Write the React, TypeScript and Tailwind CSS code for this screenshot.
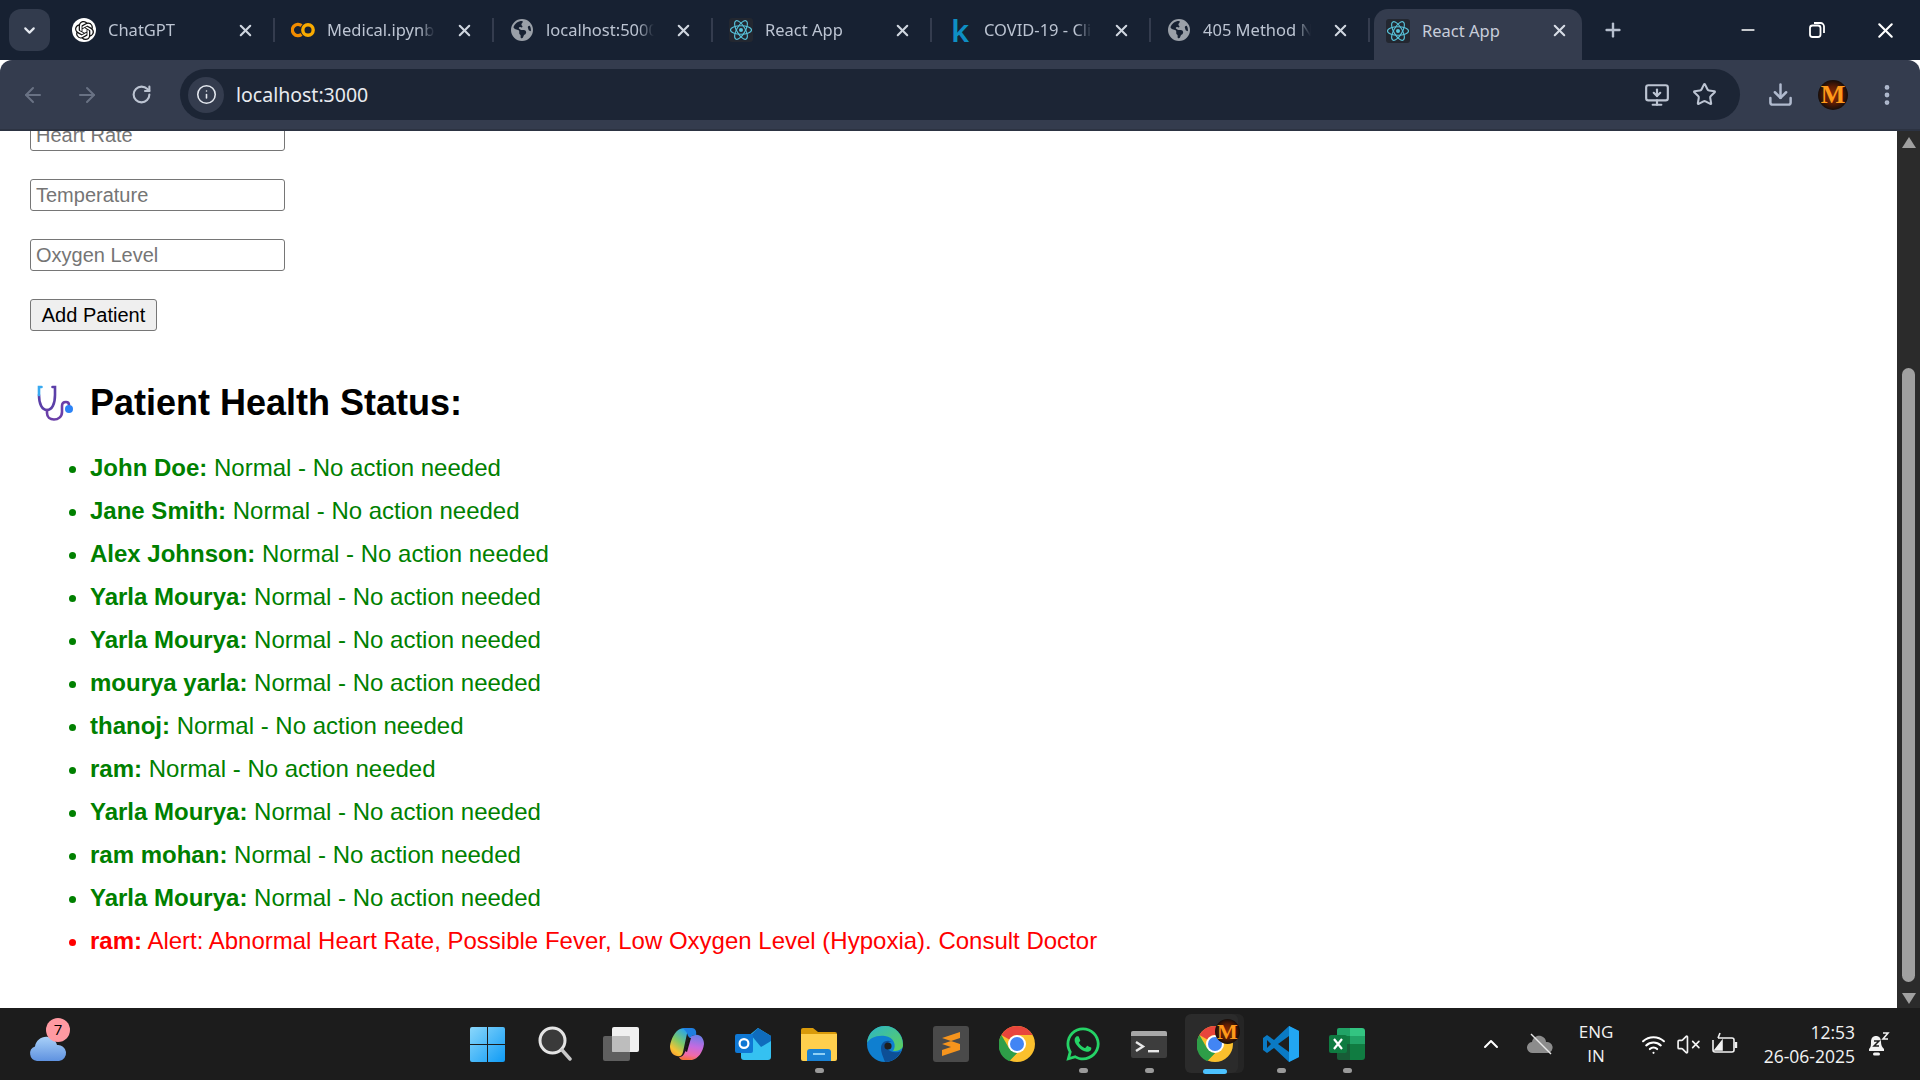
import type { ReactNode } from 'react';
import { ArrowLeft, ArrowRight, ChevronDown, ChevronUp, Download, EllipsisVertical, Info, Minus, MonitorDown, Plus, RotateCw, Star, VolumeX, Wifi, X } from 'lucide-react';
import { FaEarthAmericas } from 'react-icons/fa6';
import { FaWhatsapp } from 'react-icons/fa';
import { SiOpenai } from 'react-icons/si';

const patients = [
  { name: 'John Doe', status: 'Normal - No action needed' },
  { name: 'Jane Smith', status: 'Normal - No action needed' },
  { name: 'Alex Johnson', status: 'Normal - No action needed' },
  { name: 'Yarla Mourya', status: 'Normal - No action needed' },
  { name: 'Yarla Mourya', status: 'Normal - No action needed' },
  { name: 'mourya yarla', status: 'Normal - No action needed' },
  { name: 'thanoj', status: 'Normal - No action needed' },
  { name: 'ram', status: 'Normal - No action needed' },
  { name: 'Yarla Mourya', status: 'Normal - No action needed' },
  { name: 'ram mohan', status: 'Normal - No action needed' },
  { name: 'Yarla Mourya', status: 'Normal - No action needed' },
  { name: 'ram', status: 'Alert: Abnormal Heart Rate, Possible Fever, Low Oxygen Level (Hypoxia). Consult Doctor', alert: true }
];

function ReactLogo({ size = 24 }: { size?: number }) {
  return (
    <span className="flex h-[24px] w-[24px] items-center justify-center rounded-[3px] bg-[#232730]">
      <svg width={size} height={size} viewBox="0 0 24 24" fill="none" stroke="#58c4dc" strokeWidth="1.1">
        <ellipse cx="12" cy="12" rx="10.5" ry="4.2" />
        <ellipse cx="12" cy="12" rx="10.5" ry="4.2" transform="rotate(60 12 12)" />
        <ellipse cx="12" cy="12" rx="10.5" ry="4.2" transform="rotate(120 12 12)" />
        <circle cx="12" cy="12" r="2" fill="#58c4dc" stroke="none" />
      </svg>
    </span>
  );
}

function ColabLogo() {
  return (
    <svg width="24" height="16" viewBox="0 0 24 16" fill="none" strokeWidth="3.4">
      <path d="M10.5 3.6a5.6 5.6 0 1 0 0 8.8" stroke="#f28c00" />
      <circle cx="17" cy="8" r="5.2" stroke="#f9ab00" />
    </svg>
  );
}

function MAvatar({ className }: { className: string }) {
  return (
    <span className={`flex items-center justify-center rounded-full bg-[radial-gradient(circle,#8a2c06_0%,#5a1c04_40%,#0b0b0b_75%)] font-bold leading-none text-[#ff9a1a] [font-family:'Liberation_Serif',serif] ${className}`}>
      M
    </span>
  );
}

const browserTabs: { title: string; icon: ReactNode }[] = [
  {
    title: 'ChatGPT',
    icon: (
      <span className="flex h-[24px] w-[24px] items-center justify-center rounded-full bg-white">
        <SiOpenai size={19} color="#111" />
      </span>
    )
  },
  { title: 'Medical.ipynb', icon: <ColabLogo /> },
  { title: 'localhost:5000', icon: <FaEarthAmericas size={22} color="#9aa0a8" /> },
  { title: 'React App', icon: <ReactLogo /> },
  { title: 'COVID-19 - Clinical', icon: <span className="text-[31px] font-semibold leading-none text-[#0e8fc4]">k</span> },
  { title: '405 Method Not', icon: <FaEarthAmericas size={22} color="#9aa0a8" /> }
];

function TabStrip() {
  return (
    <div className="flex h-[60px] items-stretch bg-[#172132] pl-[9px] font-['Noto_Sans',sans-serif]">
      <div className="mt-[9px] flex h-[42px] w-[41px] items-center justify-center rounded-[12px] bg-[#323b4d]">
        <ChevronDown size={17} color="#e5e9f0" strokeWidth={3} />
      </div>
      <div className="ml-[6px] flex">
        {browserTabs.map((tab) => (
          <div key={tab.title} className="flex h-[60px] w-[219px] items-center pl-[16px]">
            <span className="flex w-[24px] shrink-0 items-center justify-center">{tab.icon}</span>
            <span className="ml-[12px] w-[113px] overflow-hidden whitespace-nowrap pt-[1px] text-[16.5px] text-[#bcc4d2] [mask-image:linear-gradient(to_right,black_85%,transparent)]">
              {tab.title}
            </span>
            <X size={19} color="#d0d6e0" strokeWidth={2.6} className="ml-[20px] shrink-0" />
            <span className="ml-[18px] h-[24px] w-[2px] shrink-0 bg-[#343c4e]" />
          </div>
        ))}
      </div>
      <div className="relative ml-[4px] mt-[9px] flex h-[51px] w-[208px] items-center rounded-t-[14px] bg-[#343c4e] pb-[8px] pl-[12px]">
        <ReactLogo />
        <span className="ml-[12px] w-[128px] pt-[1px] text-[16.5px] text-[#c8cedb]">React App</span>
        <X size={19} color="#d8dde6" strokeWidth={2.6} />
      </div>
      <Plus size={22} color="#b6bfce" strokeWidth={2.6} className="ml-[20px] mt-[19px]" />
      <div className="ml-auto flex items-start pt-[9px]">
        <div className="flex h-[42px] w-[69px] items-center justify-center"><Minus size={20} color="#fff" strokeWidth={2} /></div>
        <div className="flex h-[42px] w-[69px] items-center justify-center">
          <svg width="18" height="18" viewBox="0 0 18 18" fill="none" stroke="#fff" strokeWidth="1.8">
            <rect x="2" y="4.5" width="10.5" height="11.5" rx="2.5" />
            <path d="M6 2h6.5A3.5 3.5 0 0 1 16 5.5V12" />
          </svg>
        </div>
        <div className="flex h-[42px] w-[69px] items-center justify-center"><X size={25} color="#fff" strokeWidth={2} /></div>
      </div>
    </div>
  );
}

function ToolBar() {
  return (
    <div className="flex h-[71px] items-start rounded-t-[12px] border-b-2 border-[#2c3342] bg-[#343c4e] pl-[6px] pt-[9px] font-['Noto_Sans',sans-serif]">
      <div className="flex h-[51px] w-[54px] items-center justify-center"><ArrowLeft size={24} color="#697284" strokeWidth={2} /></div>
      <div className="flex h-[51px] w-[54px] items-center justify-center"><ArrowRight size={24} color="#697284" strokeWidth={2} /></div>
      <div className="flex h-[51px] w-[54px] items-center justify-center"><RotateCw size={21} color="#bcc4d2" strokeWidth={2.4} /></div>
      <div className="ml-[12px] flex h-[51px] w-[1560px] items-center rounded-full bg-[#1c2535] pl-[8px]">
        <span className="flex h-[36px] w-[36px] items-center justify-center rounded-full bg-[#343c4e]">
          <Info size={21} color="#e3e7ee" strokeWidth={1.8} />
        </span>
        <span className="ml-[12px] text-[19.5px] text-[#e8ebf0]">localhost:3000</span>
        <MonitorDown size={26} color="#bcc4d2" strokeWidth={2} className="ml-auto" />
        <Star size={25} color="#bcc4d2" strokeWidth={2} className="ml-[22px] mr-[23px]" />
      </div>
      <div className="flex h-[51px] items-center">
        <Download size={27} color="#b0bace" strokeWidth={2.2} className="ml-[27px]" />
        <MAvatar className="ml-[24px] h-[30px] w-[30px] text-[26px]" />
        <EllipsisVertical size={26} color="#b0bace" strokeWidth={2.4} className="ml-[26px]" />
      </div>
    </div>
  );
}

function Stethoscope() {
  return (
    <svg width="37" height="36" viewBox="0 0 37 36" fill="none" strokeLinecap="round" strokeWidth="2.6">
      <path d="M2 10C2 19 5 25 10 25C15 25 18 19 18 10V2H15.5" stroke="#5b3fa8" />
      <path d="M4.5 2H2V10" stroke="#38a9f0" />
      <path d="M10 25V28C10 32 13 34.5 17 34.5C21 34.5 25 32 25 27V21C25 18 27 17 29 17C31 17 32 18 32 20" stroke="#6a3fa8" />
      <circle cx="32" cy="24" r="4" fill="#2b83f6" stroke="none" />
    </svg>
  );
}

function PatientPage() {
  return (
    <div className="-mt-[12px] pl-[30px] font-['Liberation_Sans',sans-serif]">
      <div className="flex flex-col items-start gap-[28px]">
        {['Heart Rate', 'Temperature', 'Oxygen Level'].map((placeholder) => (
          <input
            key={placeholder}
            type="text"
            placeholder={placeholder}
            className="h-[32px] w-[255px] rounded-[3px] border border-[#767676] bg-white px-[5px] text-[20px] text-black placeholder:text-[#757575]"
          />
        ))}
        <button type="button" className="h-[32px] w-[127px] rounded-[3px] border border-[#767676] bg-[#efefef] text-[20px] text-black">
          Add Patient
        </button>
      </div>
      <div className="mt-[51px] flex items-center">
        <span className="ml-[7px] flex w-[53px]"><Stethoscope /></span>
        <h2 className="text-[36px] font-bold leading-[42px] text-black">Patient Health Status:</h2>
      </div>
      <ul className="mt-[30px] flex list-disc flex-col gap-[15px] pl-[60px] text-[24px] leading-[28px]">
        {patients.map((patient, index) => (
          <li key={index} className={patient.alert ? 'text-[#ff0000]' : 'text-[#008000]'}>
            <strong className="font-bold">{patient.name}:</strong> {patient.status}
          </li>
        ))}
      </ul>
    </div>
  );
}

function ScrollBar() {
  return (
    <div className="flex w-[23px] shrink-0 flex-col items-center bg-[#2b2b2b] pt-[6px]">
      <span className="h-0 w-0 border-x-[7px] border-b-[11px] border-x-transparent border-b-[#a0a0a0]" />
      <span className="mt-[220px] h-[614px] w-[13px] rounded-full bg-[#a0a0a0]" />
      <span className="mt-[11px] h-0 w-0 border-x-[7px] border-t-[11px] border-x-transparent border-t-[#a0a0a0]" />
    </div>
  );
}

function ChromeIcon({ size = 36 }: { size?: number }) {
  return (
    <svg width={size} height={size} viewBox="0 0 36 36">
      <circle cx="18" cy="18" r="18" fill="#fbc02d" />
      <path d="M18 0A18 18 0 0 1 33.6 9H18A9 9 0 0 0 10.2 13.5L2.4 9A18 18 0 0 1 18 0Z" fill="#e8453c" />
      <path d="M2.4 9L10.2 22.5A9 9 0 0 0 18 27L10.2 35.2A18 18 0 0 1 2.4 9Z" fill="#2e9e48" />
      <path d="M10.2 22.5L18 27L10 34.4L3 26Z" fill="#2e9e48" />
      <circle cx="18" cy="18" r="9" fill="#fff" />
      <circle cx="18" cy="18" r="7" fill="#4285f4" />
    </svg>
  );
}

const taskbarIcons: { key: string; dot?: 'gray' | 'blue'; icon: ReactNode }[] = [
  {
    key: 'start',
    icon: (
      <svg width="35" height="35" viewBox="0 0 35 35">
        <defs>
          <linearGradient id="startBlue" x1="0" y1="0" x2="1" y2="1">
            <stop offset="0" stopColor="#8ad7fb" />
            <stop offset="1" stopColor="#0f9bf5" />
          </linearGradient>
        </defs>
        <path d="M2 0H17V17H0V2A2 2 0 0 1 2 0ZM18 0H33A2 2 0 0 1 35 2V17H18ZM0 18H17V35H2A2 2 0 0 1 0 33ZM18 18H35V33A2 2 0 0 1 33 35H18Z" fill="url(#startBlue)" />
      </svg>
    )
  },
  {
    key: 'search',
    icon: (
      <svg width="34" height="36" viewBox="0 0 34 36" fill="none">
        <circle cx="14.5" cy="14.5" r="12.5" fill="#3a3a3a" stroke="#e4e4e4" strokeWidth="3" />
        <path d="M24 24L32 33" stroke="#c8c8c8" strokeWidth="3.4" strokeLinecap="round" />
      </svg>
    )
  },
  {
    key: 'taskview',
    icon: (
      <svg width="36" height="34" viewBox="0 0 36 34">
        <rect x="0" y="9" width="27" height="25" rx="2" fill="#5f5f5f" />
        <rect x="9" y="0" width="27" height="25" rx="2" fill="#f0f0f0" />
        <rect x="9" y="9" width="18" height="16" rx="1" fill="#bdbdbd" />
      </svg>
    )
  },
  {
    key: 'copilot',
    icon: (
      <svg width="34" height="32" viewBox="0 0 34 32">
        <defs>
          <linearGradient id="copA" x1="0.7" y1="0" x2="0.2" y2="1">
            <stop offset="0" stopColor="#2aa5e8" />
            <stop offset="0.45" stopColor="#7cc96a" />
            <stop offset="0.8" stopColor="#f9c233" />
            <stop offset="1" stopColor="#f59a33" />
          </linearGradient>
          <linearGradient id="copB" x1="0.6" y1="0" x2="0.4" y2="1">
            <stop offset="0" stopColor="#6a7fe8" />
            <stop offset="0.45" stopColor="#c46ae0" />
            <stop offset="0.8" stopColor="#f06aa8" />
            <stop offset="1" stopColor="#f5703f" />
          </linearGradient>
        </defs>
        <path d="M10 1C12 0 15 0 18 1L13 24C12 28 10 29 7 28C2 27 0 23 0 18C1 11 5 3 10 1Z" fill="url(#copA)" />
        <path d="M25 7C30 6 34 10 34 16C33 24 28 31 22 32H13C11 32 10 31 9 29C12 29 14 27 15 24L20 9C21 8 23 7 25 7Z" fill="url(#copB)" />
        <path d="M11 0H22C25 0 27 3 26 7C23 7 21 8 20 10L18 8C17 4 15 1 11 0Z" fill="#1f7fe0" />
        <path d="M15 23L19 10H21L17 24Z" fill="#151515" />
      </svg>
    )
  },
  {
    key: 'outlook',
    icon: (
      <svg width="36" height="32" viewBox="0 0 36 32">
        <path d="M6 14L23 0L36 8V29A3 3 0 0 1 33 32H9A3 3 0 0 1 6 29Z" fill="#35c1f1" />
        <path d="M16 7L23 0L36 8V13L26 19Z" fill="#0f6cbd" />
        <rect x="0" y="6" width="18" height="19" rx="2" fill="#0f78d4" />
        <circle cx="9" cy="15.5" r="4.4" fill="none" stroke="#fff" strokeWidth="2.2" />
      </svg>
    )
  },
  {
    key: 'explorer',
    dot: 'gray',
    icon: (
      <svg width="36" height="33" viewBox="0 0 36 33">
        <path d="M0 2A2 2 0 0 1 2 0H12L17 4H34A2 2 0 0 1 36 6V12H0Z" fill="#d99a0a" />
        <path d="M0 6H36V31A2 2 0 0 1 34 33H2A2 2 0 0 1 0 31Z" fill="#ffcf4d" />
        <path d="M6 33V24A3 3 0 0 1 9 21H27A3 3 0 0 1 30 24V33Z" fill="#1a82d4" />
        <rect x="12" y="25" width="12" height="2" fill="#8fd0f5" />
      </svg>
    )
  },
  {
    key: 'edge',
    icon: (
      <svg width="36" height="36" viewBox="0 0 36 36">
        <defs>
          <linearGradient id="edgeTop" x1="0" y1="0" x2="1" y2="1">
            <stop offset="0" stopColor="#2bb5c9" />
            <stop offset="1" stopColor="#5fd05a" />
          </linearGradient>
        </defs>
        <circle cx="18" cy="18" r="18" fill="#0f7fd0" />
        <path d="M0 17C1 6 9 0 18 0C28 0 36 8 36 19C36 23 32 25 26 25C30 20 27 11 18 10C9 9 3 12 0 17Z" fill="url(#edgeTop)" />
        <path d="M14 22C14 16 20 13 25 16C21 15 18 18 20 22C23 27 30 27 34 25C31 32 25 36 18 36C16 30 14 27 14 22Z" fill="#0d4f96" />
        <circle cx="21" cy="20" r="3.6" fill="#1e1e1e" />
      </svg>
    )
  },
  {
    key: 'sublime',
    icon: (
      <svg width="36" height="36" viewBox="0 0 36 36">
        <rect width="36" height="36" rx="3" fill="#4a4a4a" />
        <path d="M27 6V12L9 18V12Z M9 18L27 24V18L9 12Z" fill="#f5941d" />
        <path d="M27 18V24L9 30V24Z" fill="#f5941d" />
      </svg>
    )
  },
  { key: 'chrome', icon: <ChromeIcon /> },
  { key: 'whatsapp', dot: 'gray', icon: <FaWhatsapp size={38} color="#25d366" /> },
  {
    key: 'terminal',
    dot: 'gray',
    icon: (
      <svg width="36" height="27" viewBox="0 0 36 27" fill="none">
        <rect width="36" height="27" rx="2" fill="#3d3d3d" />
        <path d="M2 0H34A2 2 0 0 1 36 2V5H0V2A2 2 0 0 1 2 0Z" fill="#a8a8a8" />
        <path d="M5 11L12 15.5L5 20" stroke="#e8e8e8" strokeWidth="2.4" />
        <rect x="17" y="19" width="11" height="2.4" fill="#e8e8e8" />
      </svg>
    )
  },
  {
    key: 'chrome-active',
    dot: 'blue',
    icon: (
      <span className="relative flex">
        <ChromeIcon />
        <MAvatar className="absolute -right-[7px] -top-[7px] h-[25px] w-[25px] rounded-[6px] text-[22px]" />
      </span>
    )
  },
  {
    key: 'vscode',
    dot: 'gray',
    icon: (
      <svg width="36" height="36" viewBox="0 0 36 36">
        <path d="M26 0L36 5V31L26 36L11 22L4 27L0 24V12L4 9L11 14Z" fill="#0a7ac4" />
        <path d="M26 0L36 5V31L26 36Z" fill="#22a6f2" />
        <path d="M26 10L15 18L26 26Z" fill="#1e1e1e" />
        <path d="M4 14L8 18L4 22Z" fill="#1e1e1e" />
      </svg>
    )
  },
  {
    key: 'excel',
    dot: 'gray',
    icon: (
      <svg width="36" height="32" viewBox="0 0 36 32">
        <path d="M8 2A2 2 0 0 1 10 0H21V8H8Z" fill="#21a366" />
        <path d="M21 0H33A3 3 0 0 1 36 3V8H21Z" fill="#33c481" />
        <rect x="8" y="8" width="14" height="8" fill="#107c41" />
        <rect x="21" y="8" width="15" height="8" fill="#21a366" />
        <path d="M8 16H21V32H10A2 2 0 0 1 8 30Z" fill="#185c37" />
        <path d="M21 16H36V29A3 3 0 0 1 33 32H21Z" fill="#107c41" />
        <rect x="0" y="7" width="18" height="18" rx="2" fill="#0f7b41" />
        <path d="M5 11L13 21M13 11L5 21" stroke="#fff" strokeWidth="2.2" />
      </svg>
    )
  }
];

function TaskBar() {
  return (
    <div className="flex h-[72px] items-center bg-[#1c1c1c] font-['Open_Sans',sans-serif] text-[#f2f2f2]">
      <div className="flex w-[454px] shrink-0 items-center pl-[29px]">
        <span className="relative mt-[8px] flex">
          <svg width="38" height="25" viewBox="0 0 38 25">
            <defs>
              <linearGradient id="cloudBlue" x1="0" y1="0" x2="0" y2="1">
                <stop offset="0" stopColor="#a8d0f8" />
                <stop offset="1" stopColor="#5f92e0" />
              </linearGradient>
            </defs>
            <path d="M8 25A7.5 7.5 0 0 1 6 10.5C7 4 13 0 19 1C24 2 27 5 28 9A8 8 0 0 1 30 25Z" fill="url(#cloudBlue)" />
          </svg>
          <span className="absolute -top-[18px] left-[17px] flex h-[24px] w-[24px] items-center justify-center rounded-full bg-[#ff9aa2] text-[15px] text-black">7</span>
        </span>
      </div>
      <div className="flex shrink-0">
        {taskbarIcons.map((item) => (
          <div key={item.key} className="relative flex h-[72px] w-[66px] items-center justify-center first:mr-[2px]">
            {item.key === 'chrome-active' && (
              <span className="absolute left-[3px] top-[6px] h-[59px] w-[53px] rounded-[6px] bg-[#2b2b2b] shadow-[6px_0_0_#252525]" />
            )}
            <span className="relative flex">{item.icon}</span>
            {item.dot === 'gray' && <span className="absolute bottom-[7px] h-[5px] w-[9px] rounded-full bg-[#9a9a9a]" />}
            {item.dot === 'blue' && <span className="absolute bottom-[6px] h-[5px] w-[24px] rounded-full bg-[#4cc2ff]" />}
          </div>
        ))}
      </div>
      <div className="flex flex-1 items-center">
        <ChevronUp size={24} color="#fff" strokeWidth={2} className="ml-[99px]" />
        <svg width="26" height="22" viewBox="0 0 26 22" className="ml-[24px]">
          <path d="M6 20A5.5 5.5 0 0 1 5 9C6 4 10 2 14 3C17 4 19 6 19 9A5.5 5.5 0 0 1 21 20Z" fill="#8c8c8c" />
          <path d="M4 1L24 21" stroke="#e8e8e8" strokeWidth="1.4" />
        </svg>
        <div className="ml-[23px] flex w-[40px] flex-col items-center text-[17px] leading-[24px]">
          <span>ENG</span>
          <span>IN</span>
        </div>
        <Wifi size={25} color="#fff" strokeWidth={2} className="ml-[25px]" />
        <VolumeX size={25} color="#f2f2f2" strokeWidth={1.6} className="ml-[10px]" />
        <svg width="26" height="24" viewBox="0 0 26 24" fill="none" stroke="#f2f2f2" strokeWidth="1.6" className="ml-[11px]">
          <path d="M6 6H20A2 2 0 0 1 22 8V18A2 2 0 0 1 20 20H3A2 2 0 0 1 1 18V8" />
          <path d="M24 10V16" strokeWidth="2.4" />
          <path d="M3 18L10 9V18Z" fill="#f2f2f2" />
          <path d="M6 6L8 1" />
        </svg>
        <div className="ml-[24px] flex w-[93px] flex-col items-end text-[17.5px] leading-[24px]">
          <span>12:53</span>
          <span className="whitespace-nowrap">26-06-2025</span>
        </div>
        <svg width="24" height="26" viewBox="0 0 24 26" className="ml-[11px]">
          <path d="M3 18C5 16 5 14 5 11C5 7 7 5 10 5C13 5 15 7 15 11C15 14 16 16 18 18V20H3Z" fill="#f2f2f2" />
          <rect x="7" y="21.5" width="7" height="3" rx="1.5" fill="#f2f2f2" />
          <path d="M8 10H13L8 15H13" stroke="#1c1c1c" strokeWidth="1.5" fill="none" />
          <path d="M17 2H22L17 8H22" stroke="#f2f2f2" strokeWidth="1.6" fill="none" />
        </svg>
      </div>
    </div>
  );
}

export default function App() {
  return (
    <div className="flex h-[1080px] w-[1920px] flex-col overflow-hidden bg-white">
      <TabStrip />
      <ToolBar />
      <div className="flex h-[877px] overflow-hidden">
        <div className="flex-1 overflow-hidden">
          <PatientPage />
        </div>
        <ScrollBar />
      </div>
      <TaskBar />
    </div>
  );
}
